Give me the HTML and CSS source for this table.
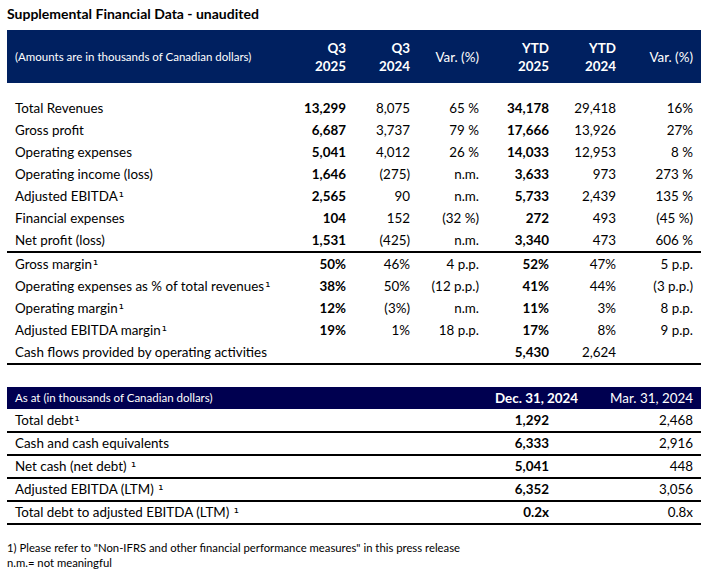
FILE: index.html
```html
<!DOCTYPE html>
<html lang="en">
<head>
<meta charset="utf-8">
<title>Supplemental Financial Data - unaudited</title>
<link rel="stylesheet" href="styles.css">
</head>
<body>
<div class="page">
  <h1 class="title">Supplemental Financial Data - unaudited</h1>

  <table class="fin">
    <colgroup>
      <col class="c-label"><col class="c-q3a"><col class="c-q3b"><col class="c-var1"><col class="c-ytda"><col class="c-ytdb"><col class="c-var2">
    </colgroup>
    <thead>
      <tr class="head">
        <th class="lbl small">(Amounts are in thousands of Canadian dollars)</th>
        <th class="b">Q3<br>2025</th>
        <th class="b">Q3<br>2024</th>
        <th class="n">Var. (%)</th>
        <th class="b">YTD<br>2025</th>
        <th class="b">YTD<br>2024</th>
        <th class="n">Var. (%)</th>
      </tr>
    </thead>
    <tbody class="sec1">
      <tr class="spacer"><td colspan="7"></td></tr>
      <tr><td class="lbl">Total Revenues</td><td class="b">13,299</td><td>8,075</td><td>65 %</td><td class="b">34,178</td><td>29,418</td><td>16%</td></tr>
      <tr><td class="lbl">Gross profit</td><td class="b">6,687</td><td>3,737</td><td>79 %</td><td class="b">17,666</td><td>13,926</td><td>27%</td></tr>
      <tr><td class="lbl">Operating expenses</td><td class="b">5,041</td><td>4,012</td><td>26 %</td><td class="b">14,033</td><td>12,953</td><td>8 %</td></tr>
      <tr><td class="lbl">Operating income (loss)</td><td class="b">1,646</td><td>(275)</td><td>n.m.</td><td class="b">3,633</td><td>973</td><td>273 %</td></tr>
      <tr><td class="lbl">Adjusted EBITDA<span class="sup">¹</span></td><td class="b">2,565</td><td>90</td><td>n.m.</td><td class="b">5,733</td><td>2,439</td><td>135 %</td></tr>
      <tr><td class="lbl">Financial expenses</td><td class="b">104</td><td>152</td><td>(32 %)</td><td class="b">272</td><td>493</td><td>(45 %)</td></tr>
      <tr class="last"><td class="lbl">Net profit (loss)</td><td class="b">1,531</td><td>(425)</td><td>n.m.</td><td class="b">3,340</td><td>473</td><td>606 %</td></tr>
    </tbody>
    <tbody class="sec2">
      <tr><td class="lbl">Gross margin<span class="sup">¹</span></td><td class="b">50%</td><td>46%</td><td>4 p.p.</td><td class="b">52%</td><td>47%</td><td>5 p.p.</td></tr>
      <tr><td class="lbl">Operating expenses as % of total revenues<span class="sup">¹</span></td><td class="b">38%</td><td>50%</td><td>(12 p.p.)</td><td class="b">41%</td><td>44%</td><td>(3 p.p.)</td></tr>
      <tr><td class="lbl">Operating margin<span class="sup">¹</span></td><td class="b">12%</td><td>(3%)</td><td>n.m.</td><td class="b">11%</td><td>3%</td><td>8 p.p.</td></tr>
      <tr><td class="lbl">Adjusted EBITDA margin<span class="sup">¹</span></td><td class="b">19%</td><td>1%</td><td>18 p.p.</td><td class="b">17%</td><td>8%</td><td>9 p.p.</td></tr>
      <tr class="last"><td class="lbl">Cash flows provided by operating activities</td><td></td><td></td><td></td><td class="b">5,430</td><td>2,624</td><td></td></tr>
    </tbody>
  </table>

  <table class="debt">
    <colgroup>
      <col class="d-label"><col class="d-dec"><col class="d-mar">
    </colgroup>
    <thead>
      <tr class="head2">
        <th class="lbl small">As at (in thousands of Canadian dollars)</th>
        <th class="b">Dec. 31, 2024</th>
        <th class="n">Mar. 31, 2024</th>
      </tr>
    </thead>
    <tbody>
      <tr><td class="lbl">Total debt<span class="sup">¹</span></td><td class="b">1,292</td><td>2,468</td></tr>
      <tr><td class="lbl">Cash and cash equivalents</td><td class="b">6,333</td><td>2,916</td></tr>
      <tr><td class="lbl">Net cash (net debt) <span class="sup">¹</span></td><td class="b">5,041</td><td>448</td></tr>
      <tr><td class="lbl">Adjusted EBITDA (LTM) <span class="sup">¹</span></td><td class="b">6,352</td><td>3,056</td></tr>
      <tr><td class="lbl">Total debt to adjusted EBITDA (LTM) <span class="sup">¹</span></td><td class="b">0.2x</td><td>0.8x</td></tr>
    </tbody>
  </table>

  <div class="notes">
    <p>1) Please refer to "Non-IFRS and other financial performance measures" in this press release</p>
    <p>n.m.= not meaningful</p>
  </div>
</div>
</body>
</html>
```

FILE: styles.css
```css
* { box-sizing: border-box; }

html, body {
  margin: 0;
  padding: 0;
  background: #ffffff;
}

body {
  font-family: Lato, "Open Sans", "Liberation Sans", sans-serif;
  color: #000;
}

.page {
  width: 705px;
  padding: 5px 4px 0 7px;
}

.title {
  margin: 0;
  font-size: 14px;
  font-weight: 700;
  line-height: 17px;
  height: 25px;
}

table {
  width: 694px;
  border-collapse: collapse;
  table-layout: fixed;
}

.c-label { width: 283px; }
.c-q3a { width: 64px; }
.c-q3b { width: 64px; }
.c-var1 { width: 69px; }
.c-ytda { width: 70px; }
.c-ytdb { width: 67px; }
.c-var2 { width: 77px; }

.d-label { width: 480px; }
.d-dec { width: 70px; }
.d-mar { width: 144px; }

th, td {
  padding: 0 8px;
  text-align: right;
  white-space: nowrap;
  font-size: 13.4px;
}

td {
  height: 22px;
  line-height: 22px;
}

.lbl { text-align: left; }
.b { font-weight: 700; }
.n { font-weight: 400; }
.small { font-size: 11.5px; font-weight: 400; }

.sup {
  font-family: "DejaVu Sans", sans-serif;
  font-size: 13px;
  line-height: 0;
  margin-left: 1px;
}

.head th {
  background: #002060;
  color: #fff;
  height: 53px;
  line-height: 18px;
  vertical-align: middle;
}

.spacer td { height: 14px; line-height: 14px; }

.fin tbody.sec1 tr.last td { border-bottom: 2px solid #000; height: 23px; }
.fin tbody.sec2 tr.last td { border-bottom: 2px solid #000; }

.debt { margin-top: 22px; }

.head2 th {
  background: #000050;
  color: #fff;
  height: 22px;
  line-height: 22px;
}

.debt tbody td {
  height: 23px;
  line-height: 21px;
  border-bottom: 2px solid #000;
}

.notes {
  margin-top: 15px;
  font-size: 11.3px;
  line-height: 15px;
}

.notes p { margin: 0; }
```
